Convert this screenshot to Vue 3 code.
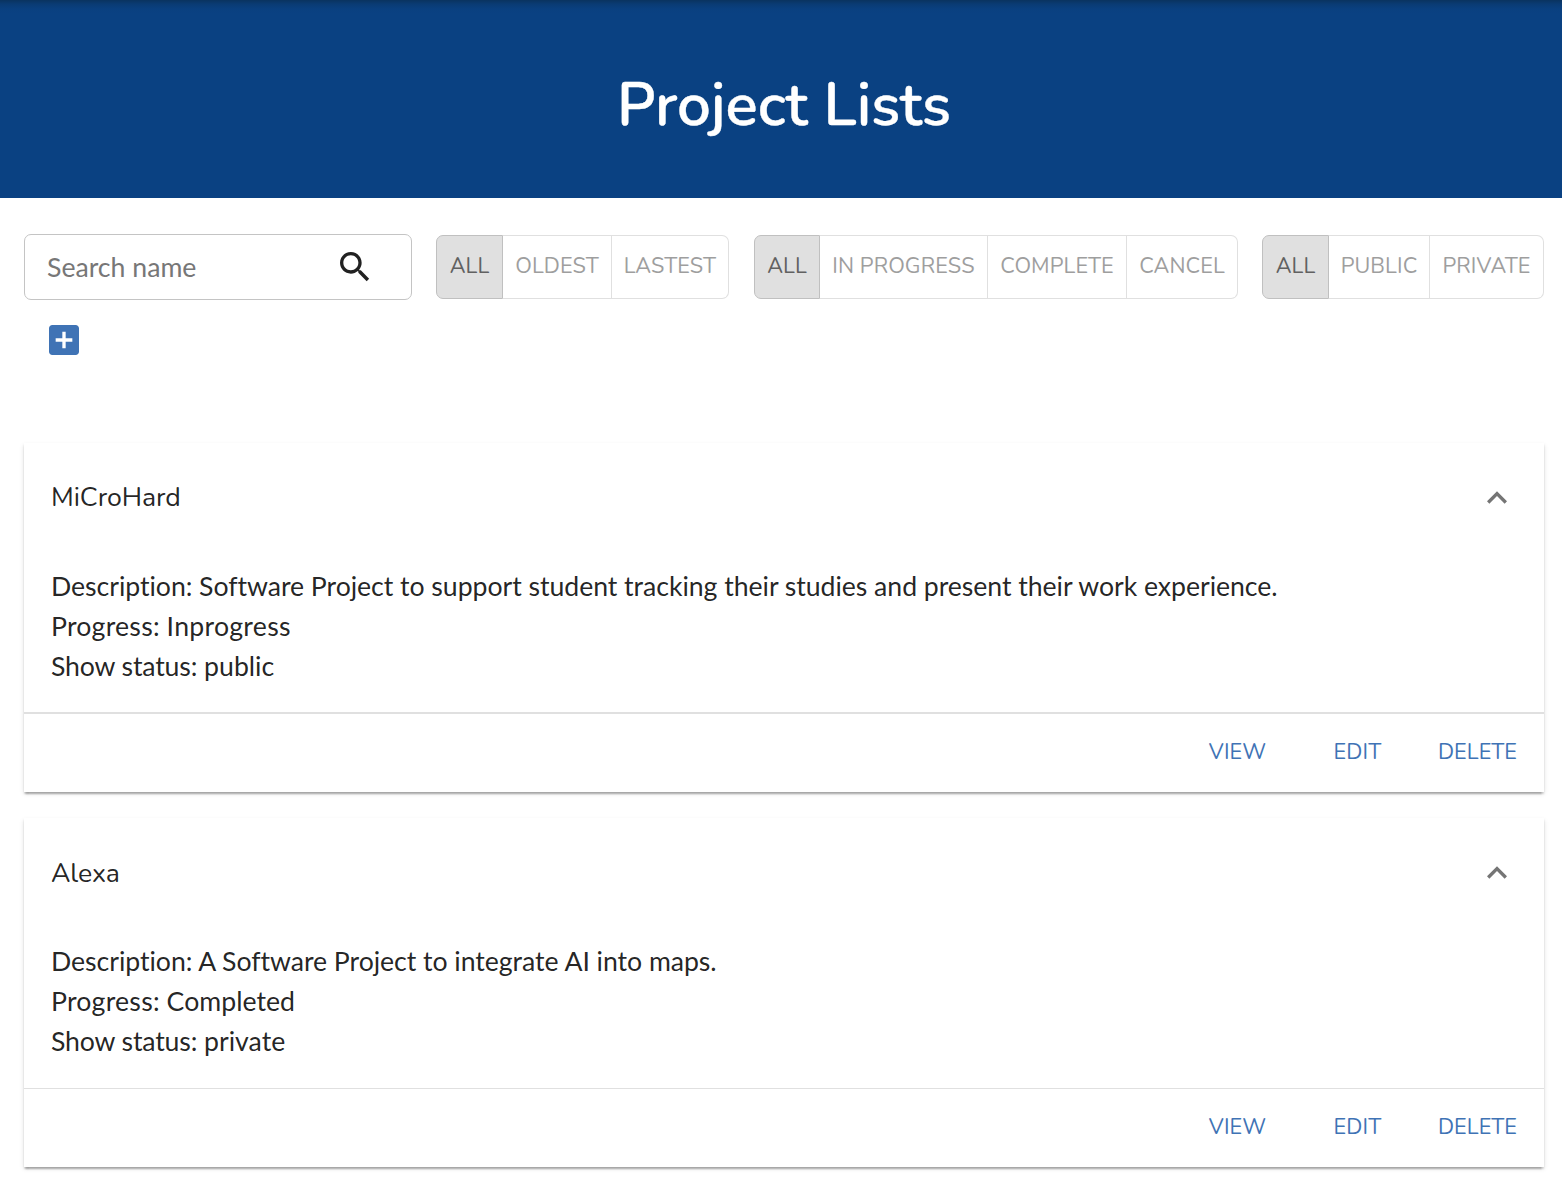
<script setup>
import { ref } from 'vue'

const groups = ref([
  { name: 'order', selected: 'All', options: [
    { label: 'All', width: 67 },
    { label: 'Oldest', width: 109 },
    { label: 'Lastest', width: 117 },
  ] },
  { name: 'progress', selected: 'All', options: [
    { label: 'All', width: 66 },
    { label: 'In progress', width: 168 },
    { label: 'Complete', width: 139 },
    { label: 'Cancel', width: 111 },
  ] },
  { name: 'visibility', selected: 'All', options: [
    { label: 'All', width: 67 },
    { label: 'Public', width: 101 },
    { label: 'Private', width: 114 },
  ] },
])

const projects = [
  {
    name: 'MiCroHard',
    description: 'Software Project to support student tracking their studies and present their work experience.',
    progress: 'Inprogress',
    status: 'public',
  },
  {
    name: 'Alexa',
    description: 'A Software Project to integrate AI into maps.',
    progress: 'Completed',
    status: 'private',
  },
]
</script>

<template>
  <div class="page">
    <header class="banner">
      <h1>Project Lists</h1>
    </header>

    <div class="filters">
      <div class="search">
        <input type="text" placeholder="Search name" aria-label="Search name" />
        <svg class="search-icon" viewBox="0 0 24 24" aria-hidden="true">
          <path d="M15.5 14h-.79l-.28-.27C15.41 12.59 16 11.11 16 9.5 16 5.91 13.09 3 9.5 3S3 5.91 3 9.5 5.91 16 9.5 16c1.61 0 3.09-.59 4.23-1.57l.27.28v.79l5 4.99L20.49 19l-4.99-5zm-6 0C7.01 14 5 11.99 5 9.5S7.01 5 9.5 5 14 7.01 14 9.5 11.99 14 9.5 14z" />
        </svg>
      </div>
      <div v-for="group in groups" :key="group.name" class="toggle-group">
        <button
          v-for="option in group.options"
          :key="option.label"
          class="toggle"
          :class="{ selected: option.label === group.selected }"
          :style="{ width: option.width + 'px' }"
          @click="group.selected = option.label"
        >{{ option.label }}</button>
      </div>
    </div>

    <button class="add" aria-label="Add project">
      <svg viewBox="0 0 24 24">
        <path d="M19 3H5c-1.11 0-2 .9-2 2v14c0 1.1.89 2 2 2h14c1.1 0 2-.9 2-2V5c0-1.1-.9-2-2-2zm-2 10h-4v4h-2v-4H7v-2h4V7h2v4h4v2z" />
      </svg>
    </button>

    <main class="list">
      <article v-for="project in projects" :key="project.name" class="card">
        <div class="summary">
          <span class="name">{{ project.name }}</span>
          <svg class="chevron" viewBox="0 0 24 24" aria-hidden="true">
            <path d="M12 8l-6 6 1.41 1.41L12 10.83l4.59 4.58L18 14z" />
          </svg>
        </div>
        <div class="details">
          <div class="description">Description: {{ project.description }}</div>
          <div class="progress"><span class="label">Progress:</span> <span :class="project.progress.toLowerCase()">{{ project.progress }}</span></div>
          <div class="status"><span class="label">Show status:</span> {{ project.status }}</div>
        </div>
        <div class="actions">
          <button>View</button>
          <button>Edit</button>
          <button>Delete</button>
        </div>
      </article>
    </main>
  </div>
</template>

<style>
body {
  margin: 0;
  background: #fff;
}
</style>

<style scoped>
.page {
  box-sizing: border-box;
  width: 1562px;
  height: 1192px;
  overflow: hidden;
  font-family: Lato, "Liberation Sans", sans-serif;
  color: rgba(0, 0, 0, 0.87);
}
button {
  box-sizing: border-box;
  margin: 0;
  padding: 0;
  background: none;
  border: 0;
  font-family: Nunito, Lato, sans-serif;
  font-size: 21.67px;
  letter-spacing: 0.12px;
  text-transform: uppercase;
  white-space: nowrap;
}
.banner {
  height: 198px;
  display: flex;
  justify-content: center;
  background: linear-gradient(#0a335f 0, #0a3b73 4px, #0a4080 9px, #0a4182 14px);
}
h1 {
  margin: 63px 0 0 6px;
  font-family: Nunito, Lato, sans-serif;
  font-size: 60px;
  line-height: 84px;
  font-weight: 600;
  color: #fff;
  -webkit-text-stroke: 0.4px #fff;
}
.filters {
  display: flex;
  align-items: center;
  margin: 36px 18px 0 24px;
  height: 66px;
}
.search {
  box-sizing: border-box;
  width: 388px;
  height: 66px;
  margin-right: 24px;
  border: 1px solid #c4c4c4;
  border-radius: 7px;
  display: flex;
  align-items: center;
}
.search input {
  box-sizing: border-box;
  width: 310px;
  height: 60px;
  padding: 0 0 0 22px;
  border: 0;
  outline: 0;
  background: none;
  font-family: inherit;
  font-size: 26.67px;
}
.search input::placeholder {
  color: #777;
  opacity: 1;
}
.search-icon {
  width: 40px;
  height: 40px;
  fill: rgba(0, 0, 0, 0.87);
}
.toggle-group {
  display: flex;
  height: 64px;
  margin-right: 25px;
}
.toggle-group:nth-child(3) {
  margin-right: 24px;
}
.toggle-group:last-child {
  margin-right: 0;
}
.toggle {
  height: 64px;
  padding-bottom: 2px;
  border: 1px solid #e0e0e0;
  border-left-width: 0;
  color: #9e9e9e;
}
.toggle:first-child {
  border-left-width: 1px;
  border-radius: 7px 0 0 7px;
}
.toggle:last-child {
  border-radius: 0 7px 7px 0;
}
.toggle.selected {
  background: #e0e0e0;
  border-color: #c0c0c0;
  color: #616161;
}
.add {
  display: block;
  width: 40px;
  height: 40px;
  margin: 20px 0 0 44px;
}
.add svg {
  display: block;
  width: 40px;
  height: 40px;
  fill: #3f73b5;
}
.list {
  display: flex;
  flex-direction: column;
  gap: 26px;
  margin: 83px 18px 0 24px;
}
.card {
  height: 349px;
  display: flex;
  flex-direction: column;
  box-shadow: 0 3.33px 1.67px -1.67px rgba(0, 0, 0, 0.2),
    0 1.67px 1.67px 0 rgba(0, 0, 0, 0.14), 0 1.67px 5px 0 rgba(0, 0, 0, 0.12);
}
.summary {
  height: 109px;
  padding: 0 27px;
  display: flex;
  align-items: center;
  justify-content: space-between;
}
.name {
  margin-bottom: 2px;
  font-family: Nunito, Lato, sans-serif;
  font-size: 26.67px;
  line-height: 40px;
  letter-spacing: -0.08px;
}
.card:last-child .name {
  margin-bottom: 0;
}
.chevron {
  width: 40px;
  height: 40px;
  fill: #757575;
}
.details {
  height: 160px;
  box-sizing: border-box;
  padding: 14px 27px 0;
  font-size: 26.67px;
  line-height: 40px;
  font-variant-ligatures: none;
}
.card:last-child .details {
  height: 161px;
}
.description {
  letter-spacing: -0.048px;
}
.progress .label {
  letter-spacing: 0.22px;
}
.inprogress {
  letter-spacing: 0.27px;
}
.status .label {
  letter-spacing: -0.15px;
}
.actions {
  flex: 1;
  display: flex;
  justify-content: flex-end;
  align-items: center;
  padding: 0 13px 2px 0;
  border-top: 1px solid #e0e0e0;
}
.card:first-child .actions {
  border-top-width: 2px;
}
.actions button {
  width: 107px;
  height: 52px;
  margin-left: 13px;
  color: #3f73b5;
}
</style>
